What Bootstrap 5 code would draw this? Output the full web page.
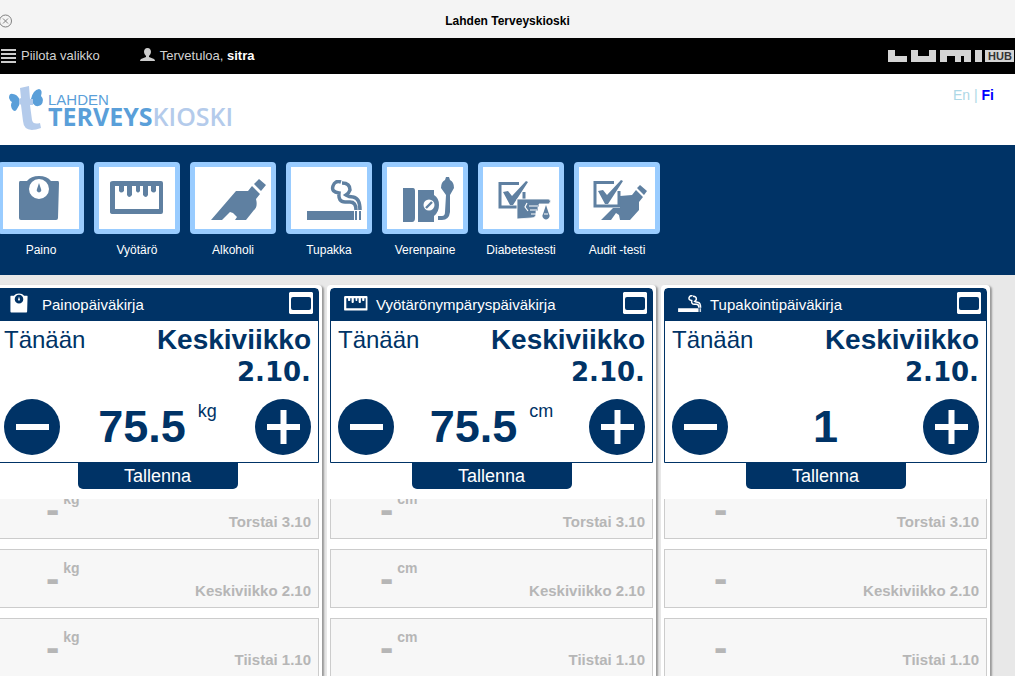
<!DOCTYPE html>
<html lang="fi">
<head>
<meta charset="utf-8">
<meta name="viewport" content="width=device-width, initial-scale=1">
<title>Lahden Terveyskioski</title>
<link href="https://cdn.jsdelivr.net/npm/bootstrap@5.3.0/dist/css/bootstrap.min.css" rel="stylesheet">
<style>
:root { --navy: #003366; --sky: #99ccff; --steel: #5f80a1; }
body { font-family: "Liberation Sans", Arial, sans-serif; background: #e8e8e8; color: var(--navy); }
svg { display: block; flex: none; }
.titlebar { height: 38px; background: #f4f4f4; color: #000; font-size: 12px; }
.close-btn { width: 12px; height: 38px; padding: 0; }
.topbar { height: 36px; background: #000; font-size: 13px; padding: 0 1px; }
.topbar a { color: #d2d2d2; }
.user-link { margin-left: 40px; }
.brandbar { height: 71px; padding: 11px 21px 0 8px; }
.brand-first { font-size: 15px; line-height: 14px; color: #5a9fd9; }
.brand-second { font-family: "Open Sans", sans-serif; font-size: 25px; line-height: 18px; font-weight: 700; color: #5a9fd9; }
.brand-second span { color: #b4cbeb; font-weight: 600; }
.lang { font-size: 14px; line-height: 20px; color: lightblue; }
.lang a { color: lightblue; }
.lang a.active { color: #00f; }
.tile-band { background: var(--navy); }
.tiles { height: 130px; gap: 10px; padding-top: 17px; margin-left: -2px; }
.tile { width: 86px; font-size: 12px; line-height: 16px; color: #fff; }
.tile-box { height: 72px; border: 5px solid var(--sky); border-radius: 4px; background: #fff; color: var(--steel); }
.diaries { display: grid; grid-template-columns: repeat(3, minmax(0, 1fr)); gap: 5px; margin: 10px 25px 0 -7px; min-height: 0; }
.diary { background: #fff; padding: 3px 3px 0; border-radius: 4px 4px 0 0; box-shadow: 2px 1px 2px #999; min-height: 0; }
.entry { border: 1px solid var(--navy); border-radius: 4px 4px 0 0; padding-bottom: 7px; }
.entry-head { height: 32px; background: var(--navy); color: #fff; font-size: 15px; padding: 0 5px 0 13px; gap: 8px; }
.entry-day { padding: 3px 7px 11px; line-height: 32px; }
.today { font-size: 24px; }
.weekday { font-size: 28px; }
.date { font-family: "DejaVu Sans", sans-serif; font-size: 26px; }
.entry-value { padding: 0 7px; }
.amount { font-size: 45px; line-height: 56px; font-weight: 700; }
.unit { font-size: 18px; line-height: 24px; margin-left: 12px; }
.save { width: 160px; height: 26px; background: var(--navy); color: #fff; font-size: 18px; line-height: 24px; border-radius: 0 0 5px 5px; }
.history { margin-top: 10px; min-height: 0; }
.history ul { margin-top: -19px; gap: 10px; }
.history li { height: 59px; flex: none; border: 1px solid #ccc; background: #f7f7f7; color: #b6b6b6; font-weight: 700; padding: 0 7px 0 49px; }
.dash { font-size: 40px; line-height: 56px; }
.small-unit { font-size: 14px; line-height: 20px; margin: 8px 0 0 4px; }
.day { font-size: 15px; line-height: 20px; margin-top: 31px; }
</style>
<script src="https://cdn.jsdelivr.net/npm/bootstrap@5.3.0/dist/js/bootstrap.bundle.min.js"></script>
</head>
<body class="vh-100 d-flex flex-column overflow-hidden">

<svg width="0" height="0" class="position-absolute" aria-hidden="true">
  <symbol id="scale" viewBox="0 0 42 46"><path fill="currentColor" fill-rule="evenodd" d="M2 6H9Q13 1 21 1T33 6H40Q41 6 41 8L40 43Q40 45 38 45H3Q1 45 1 43V8Q1 6 2 6ZM21 4A10 10 0 1 0 21 24A10 10 0 1 0 21 4Z"/><path fill="currentColor" d="M21 8L19 14A2.3 2.3 0 1 0 23 14Z"/></symbol>
  <symbol id="ruler" viewBox="0 0 54 34"><path fill="currentColor" fill-rule="evenodd" d="M3 0H51Q53 0 53 2V31Q53 33 51 33H3Q0 33 0 31V2Q0 0 3 0ZM5 5V28H49V5H46V10Q44 13 41 10V5H38V14Q36 18 33 14V5H30V10Q28 13 26 10V5H22V14Q19 18 17 14V5H14V10Q11 13 9 10V5Z"/></symbol>
  <symbol id="bottle" viewBox="0 0 56 42"><path fill="currentColor" d="M0 41L25 12H37L41 7L49 15L45 20Q47 28 43 31L35 41H24L26 38L22 34L19 33L11 41ZM43 5L48 0L55 6L50 12Z"/></symbol>
  <symbol id="smoke" viewBox="0 0 56 40"><path fill="currentColor" d="M0 31H47V40H0ZM48 31H50V40H48ZM52 31H54V40H52Z"/><path fill="none" stroke="currentColor" stroke-width="3.500" d="M34 2Q28 0 26 6Q24 12 32 13Q31 22 38 22H43Q49 22 49 30M35 3Q43 3 43 10Q42 13 39 15Q42 17 46 17Q53 18 53 30"/></symbol>
  <symbol id="pressure" viewBox="0 0 54 46"><path fill="currentColor" d="M2 11H12Q14 11 14 14V41Q14 45 11 45H2ZM17 13H33V18Q38 21 38 28T33 39V45H17Z"/><circle cx="28" cy="28" r="5.500" fill="#fff"/><path stroke="currentColor" stroke-width="2.4" d="M25 31L31 25"/><path fill="currentColor" d="M45 0H48L49 3Q53 5 53 11L49 18V35Q48 43 41 43H37V39H41Q44 39 44 35L45 18L40 11Q40 5 44 3Z"/></symbol>
  <symbol id="check" viewBox="0 0 30 28"><path fill="none" stroke="currentColor" stroke-width="3" d="M21 2.500H2V26H26V11"/><path fill="currentColor" d="M5 11L10 10L14 15L28 0L30 1L15 24H12Z"/></symbol>
  <symbol id="diabetes" viewBox="0 0 53 39"><use href="#check" width="30" height="28"/><path fill="currentColor" stroke="#fff" stroke-width=".8" d="M19 18H51Q54 20 51 23H41V26H40V30H38V33Q38 37 33 37L19 38Z"/><path fill="none" stroke="#fff" stroke-width="1.2" d="M29 22L27 26L30 30M31 25H40M32 29H39M33 33H38"/><path fill="currentColor" d="M48 24L45 33A3.500 3.500 0 1 0 51 33Z"/><path stroke="#fff" d="M46 33H50"/></symbol>
  <symbol id="audit" viewBox="0 0 54 41"><path fill="currentColor" d="M8 40L20 28H27V16L39 15L43 10L50 17L46 22V30L37 40H27L26 35L23 33L18 40ZM44 8L47 5L54 11L51 15Z"/><use href="#check" width="30" height="28"/></symbol>
  <symbol id="window" viewBox="0 0 24 22"><path fill="#fff" fill-rule="evenodd" d="M1 0H23L24 1V21L23 22H1L0 21V1ZM4 5Q2 5 2 7V16Q2 18 4 18H20Q22 18 22 16V7Q22 5 20 5Z"/></symbol>
  <symbol id="minus" viewBox="0 0 56 56"><circle cx="28" cy="28" r="28" fill="#003366"/><path stroke="#fff" stroke-width="6" d="M12 28H45"/></symbol>
  <symbol id="plus" viewBox="0 0 56 56"><circle cx="28" cy="28" r="28" fill="#003366"/><path stroke="#fff" stroke-width="6" d="M12 28H45M28.500 11V45"/></symbol>
</svg>

<header class="flex-shrink-0">
  <div class="titlebar position-relative d-flex align-items-center justify-content-center fw-bold">
    <button class="close-btn btn border-0 position-absolute start-0 top-0" aria-label="Sulje"><svg width="12" height="38" viewBox="0 0 12 38" fill="none" stroke="#808080"><circle cx="5.500" cy="21" r="6"/><path d="M3 18.500L8 23.500M8 18.500L3 23.500"/></svg></button>
    <span class="pt-1">Lahden Terveyskioski</span>
  </div>
  <nav class="topbar d-flex align-items-center">
    <a href="#" class="d-flex align-items-center text-decoration-none"><svg class="me-1" width="16" height="14" viewBox="0 0 16 14"><path stroke="#ccc" stroke-width="2" d="M0 1H15M0 5H15M0 9H15M0 13H15"/></svg>Piilota valikko</a>
    <a href="#" class="user-link d-flex align-items-center text-decoration-none"><svg class="me-1" width="16" height="16" viewBox="0 0 16 16"><path fill="#ccc" d="M7.500 0C10 0 11 2 11 4Q11 6 9 8V9L14 11Q15 12 15 13H0Q0 12 1 11L6 9V8Q4 6 4 4C4 2 5 0 7.500 0Z"/></svg><span>Tervetuloa, <b class="text-white">sitra</b></span></a>
    <svg class="ms-auto" width="126" height="12" viewBox="0 0 126 12" role="img" aria-label="Lumi Hub"><path fill="#d4d4d4" d="M0 0H7V6H19V12H0ZM23 0H30V6H41V0H48V12H23ZM52 0H83V12H76V6H73V12H67V6H59V12H52ZM87 0H94V12H87ZM97 0H126V12H97Z"/><text x="112" y="10" text-anchor="middle" font-family="Liberation Sans, sans-serif" font-weight="700" font-size="11" fill="#333">HUB</text></svg>
  </nav>
  <div class="brandbar bg-white d-flex align-items-start justify-content-between">
    <a href="#" class="d-flex text-decoration-none"><svg width="40" height="46" viewBox="0 0 40 46"><path fill="#5a9fd9" d="M12 15Q9 9 5 9Q1 8 1 13Q2 16 4 17Q2 20 4 24Q7 28 9 24Q12 20 12 15ZM23 14Q25 5 31 4Q35 5 33 11Q37 15 33 20Q26 24 23 14Z"/><path fill="#b4cbeb" d="M12 3L21 1L22 14H25V20H22L24 35Q25 40 32 38L33 43Q16 49 15 36L13 20L11 18V14L13 13Z"/></svg><span class="pt-1"><span class="brand-first d-block pt-1">LAHDEN</span><span class="brand-second d-block">TERVEYS<span>KIOSKI</span></span></span></a>
    <div class="lang"><a href="#" class="text-decoration-none">En</a> | <a href="#" class="active fw-bold text-decoration-none">Fi</a></div>
  </div>
  <div class="tile-band"><nav class="tiles d-flex text-center">
    <a href="#" class="tile text-decoration-none"><span class="tile-box d-flex align-items-center justify-content-center mb-2 pe-1"><svg width="42" height="46"><use href="#scale"/></svg></span>Paino</a>
    <a href="#" class="tile text-decoration-none"><span class="tile-box d-flex align-items-center justify-content-center mb-2"><svg width="54" height="34"><use href="#ruler"/></svg></span>Vyötärö</a>
    <a href="#" class="tile text-decoration-none"><span class="tile-box d-flex align-items-center justify-content-end mb-2 pt-1 pe-1"><svg width="56" height="42"><use href="#bottle"/></svg></span>Alkoholi</a>
    <a href="#" class="tile text-decoration-none"><span class="tile-box d-flex align-items-center justify-content-end mb-2 pt-1 pe-1"><svg width="56" height="40"><use href="#smoke"/></svg></span>Tupakka</a>
    <a href="#" class="tile text-decoration-none"><span class="tile-box d-flex align-items-center justify-content-end mb-2 pt-1 pe-2"><svg width="54" height="46"><use href="#pressure"/></svg></span>Verenpaine</a>
    <a href="#" class="tile text-decoration-none"><span class="tile-box d-flex align-items-center justify-content-end mb-2 pt-1 pe-2"><svg width="53" height="39"><use href="#diabetes"/></svg></span>Diabetestesti</a>
    <a href="#" class="tile text-decoration-none"><span class="tile-box d-flex align-items-center justify-content-end mb-2 pt-1 pe-2"><svg width="54" height="41"><use href="#audit"/></svg></span>Audit -testi</a>
  </nav></div>
</header>

<main class="diaries flex-grow-1">
  <section class="diary d-flex flex-column">
    <div class="entry">
      <div class="entry-head d-flex align-items-center"><svg class="mb-1" width="24" height="20"><use href="#scale" width="18" height="20"/></svg><span>Painopäiväkirja</span><button class="btn p-0 border-0 ms-auto mb-1" aria-label="Avaa"><svg width="24" height="22"><use href="#window"/></svg></button></div>
      <div class="entry-day d-flex justify-content-between"><span class="today">Tänään</span><span class="text-end fw-bold"><span class="weekday d-block">Keskiviikko</span><span class="date d-block">2.10.</span></span></div>
      <div class="entry-value d-flex justify-content-between"><button class="btn p-0 border-0" aria-label="Vähennä"><svg width="56" height="56"><use href="#minus"/></svg></button><div class="d-flex"><span class="amount">75.5</span><span class="unit">kg</span></div><button class="btn p-0 border-0" aria-label="Lisää"><svg width="56" height="56"><use href="#plus"/></svg></button></div>
    </div>
    <button class="save btn border-0 p-0 mx-auto flex-shrink-0">Tallenna</button>
    <div class="history overflow-hidden flex-grow-1"><ul class="list-unstyled d-flex flex-column mb-0">
      <li class="d-flex align-items-start"><span class="dash">-</span><span class="small-unit">kg</span><span class="day ms-auto">Torstai 3.10</span></li>
      <li class="d-flex align-items-start"><span class="dash">-</span><span class="small-unit">kg</span><span class="day ms-auto">Keskiviikko 2.10</span></li>
      <li class="d-flex align-items-start"><span class="dash">-</span><span class="small-unit">kg</span><span class="day ms-auto">Tiistai 1.10</span></li>
    </ul></div>
  </section>
  <section class="diary d-flex flex-column">
    <div class="entry">
      <div class="entry-head d-flex align-items-center"><svg class="mb-1" width="24" height="15"><use href="#ruler"/></svg><span>Vyötärönympäryspäiväkirja</span><button class="btn p-0 border-0 ms-auto mb-1" aria-label="Avaa"><svg width="24" height="22"><use href="#window"/></svg></button></div>
      <div class="entry-day d-flex justify-content-between"><span class="today">Tänään</span><span class="text-end fw-bold"><span class="weekday d-block">Keskiviikko</span><span class="date d-block">2.10.</span></span></div>
      <div class="entry-value d-flex justify-content-between"><button class="btn p-0 border-0" aria-label="Vähennä"><svg width="56" height="56"><use href="#minus"/></svg></button><div class="d-flex"><span class="amount">75.5</span><span class="unit">cm</span></div><button class="btn p-0 border-0" aria-label="Lisää"><svg width="56" height="56"><use href="#plus"/></svg></button></div>
    </div>
    <button class="save btn border-0 p-0 mx-auto flex-shrink-0">Tallenna</button>
    <div class="history overflow-hidden flex-grow-1"><ul class="list-unstyled d-flex flex-column mb-0">
      <li class="d-flex align-items-start"><span class="dash">-</span><span class="small-unit">cm</span><span class="day ms-auto">Torstai 3.10</span></li>
      <li class="d-flex align-items-start"><span class="dash">-</span><span class="small-unit">cm</span><span class="day ms-auto">Keskiviikko 2.10</span></li>
      <li class="d-flex align-items-start"><span class="dash">-</span><span class="small-unit">cm</span><span class="day ms-auto">Tiistai 1.10</span></li>
    </ul></div>
  </section>
  <section class="diary d-flex flex-column">
    <div class="entry">
      <div class="entry-head d-flex align-items-center"><svg class="mb-1" width="24" height="17"><use href="#smoke"/></svg><span>Tupakointipäiväkirja</span><button class="btn p-0 border-0 ms-auto mb-1" aria-label="Avaa"><svg width="24" height="22"><use href="#window"/></svg></button></div>
      <div class="entry-day d-flex justify-content-between"><span class="today">Tänään</span><span class="text-end fw-bold"><span class="weekday d-block">Keskiviikko</span><span class="date d-block">2.10.</span></span></div>
      <div class="entry-value d-flex justify-content-between"><button class="btn p-0 border-0" aria-label="Vähennä"><svg width="56" height="56"><use href="#minus"/></svg></button><div class="d-flex"><span class="amount">1</span></div><button class="btn p-0 border-0" aria-label="Lisää"><svg width="56" height="56"><use href="#plus"/></svg></button></div>
    </div>
    <button class="save btn border-0 p-0 mx-auto flex-shrink-0">Tallenna</button>
    <div class="history overflow-hidden flex-grow-1"><ul class="list-unstyled d-flex flex-column mb-0">
      <li class="d-flex align-items-start"><span class="dash">-</span><span class="day ms-auto">Torstai 3.10</span></li>
      <li class="d-flex align-items-start"><span class="dash">-</span><span class="day ms-auto">Keskiviikko 2.10</span></li>
      <li class="d-flex align-items-start"><span class="dash">-</span><span class="day ms-auto">Tiistai 1.10</span></li>
    </ul></div>
  </section>
</main>
</body>
</html>
